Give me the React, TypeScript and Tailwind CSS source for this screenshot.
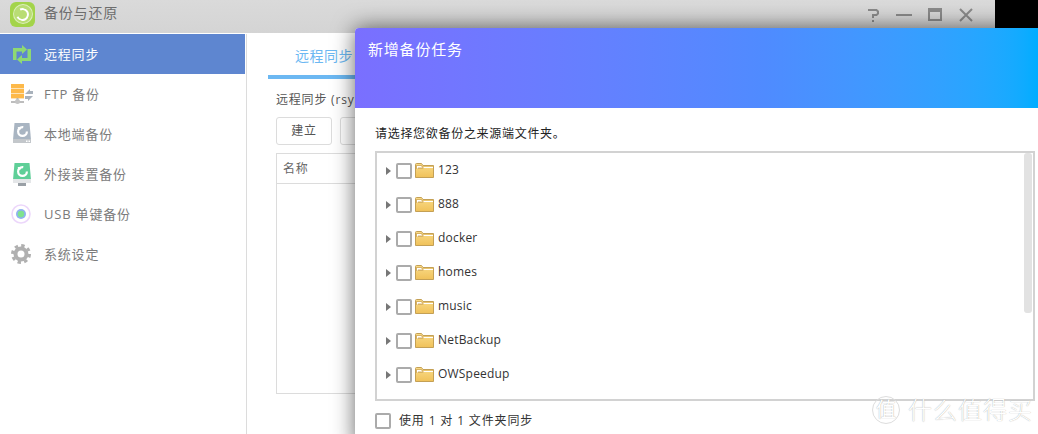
const CJK = "font-['Open_Sans','Noto_Sans_CJK_SC',sans-serif]";

const FOLDERS = ["123", "888", "docker", "homes", "music", "NetBackup", "OWSpeedup"];

function SyncIcon() {
    return (
        <svg width="18" height="19" viewBox="0 0 18 19" fill="#8ed973" className="ml-[2px]">
            <path d="M0 3h9V0l5 4.5L9 9V6.5H3.5V15H0Z" />
            <path d="M18 16H9v3l-5-4.5L9 10v3h5.5V4H18Z" />
        </svg>
    );
}

function FtpIcon() {
    return (
        <svg width="23" height="20" viewBox="0 0 23 20">
            <rect x="0" y="0" width="13" height="4.4" fill="#fdb94a" />
            <rect x="0" y="5" width="13" height="4.4" fill="#fdb94a" />
            <rect x="0" y="10" width="13" height="4.4" fill="#fdb94a" />
            <rect x="5.5" y="14" width="2" height="2" fill="#b5b5b5" />
            <rect x="0" y="17" width="13" height="2" fill="#bdbdbd" />
            <circle cx="6.5" cy="17.5" r="2.5" fill="#c4c4c4" />
            <path d="M14 10l5-5v2h3v3ZM14 12h8l-5 5v-2h-3Z" fill="#a9b2bc" />
        </svg>
    );
}

function DriveIcon({ color, foot, stub }: { color: string; foot: string; stub?: boolean }) {
    return (
        <svg width="20" height="23" viewBox="0 0 20 23" className="ml-[1px]">
            <path d="M2.5 0h15L19 17H1Z" fill={color} />
            <rect x="1" y="16" width="18" height="4" fill={foot} />
            {!stub && <path d="M14 17.5h1.5v1.5H14ZM16.5 17.5H18v1.5h-1.5Z" fill="#fff" />}
            <circle cx="10.5" cy="8.5" r="4.4" fill="none" stroke="#fff" strokeWidth="2.2" strokeDasharray="21 7" />
            <path d="M5.5 4l4.5.2-2.2 3.3Z" fill="#fff" />
            {stub && <rect x="6" y="20" width="8" height="3" fill="#9aa0a6" />}
        </svg>
    );
}

function UsbIcon() {
    return (
        <svg width="20" height="20" viewBox="0 0 20 20">
            <circle cx="10" cy="10" r="9" fill="#fff" stroke="#ecd7fb" strokeWidth="1.6" />
            <circle cx="10" cy="10" r="5" fill="#8fb2f0" />
            <circle cx="10" cy="10" r="3.2" fill="#7fe38f" />
        </svg>
    );
}

function GearIcon() {
    return (
        <svg width="20" height="20" viewBox="0 0 20 20" fill="none" stroke="#b0b0b0">
            <circle cx="10" cy="10" r="5.5" strokeWidth="4" />
            <circle cx="10" cy="10" r="8.5" strokeWidth="3" strokeDasharray="3.4 3.27" />
        </svg>
    );
}

function FolderIcon() {
    return (
        <svg width="19" height="15" viewBox="0 0 19 15">
            <defs>
                <linearGradient id="folderFill" x1="0" y1="0" x2="0" y2="1">
                    <stop offset="0" stopColor="#f9dc8a" />
                    <stop offset="1" stopColor="#f0c159" />
                </linearGradient>
            </defs>
            <path d="M.5 14.5V1.5A1 1 0 0 1 1.5.5h5L8 2.5h10.5v12Z" fill="url(#folderFill)" stroke="#c4a055" />
            <path d="M1 2h5.5L8 3.5h10V5H9L7.5 6H1Z" fill="#d9b364" />
            <path d="M2 3h4l1.5 1.5H3V5.5H2Z" fill="#fff" />
            <path d="M8 4h10v1H9Z" fill="#fff" />
        </svg>
    );
}

function Check() {
    return <span className="block w-[16px] h-[16px] rounded-[2px] border-2 border-[#ababab] bg-white shrink-0" />;
}

const NAV = [
    { label: "远程同步", icon: <SyncIcon />, active: true },
    { label: "FTP 备份", icon: <FtpIcon /> },
    { label: "本地端备份", icon: <DriveIcon color="#a9b5c2" foot="#c3c7cb" /> },
    { label: "外接装置备份", icon: <DriveIcon color="#5fcf98" foot="#e4e6e8" stub /> },
    { label: "USB 单键备份", icon: <UsbIcon /> },
    { label: "系统设定", icon: <GearIcon /> },
];

export default function App() {
    return (
        <div className={`relative w-[1038px] h-[434px] overflow-hidden bg-black ${CJK}`}>
            {/* App window */}
            <div className="w-[995px] h-[434px] bg-white flex flex-col">
                {/* Title bar */}
                <div className="h-[33px] shrink-0 bg-gradient-to-b from-[#dadada] to-[#d4d4d4] flex items-center">
                    <div className="ml-[10px] -mt-[5px] w-[25px] h-[25px] rounded-[6px] bg-[#a3d44a] flex items-center justify-center">
                        <div className="w-[20px] h-[20px] rounded-full bg-[#b9dd74] border border-white/50 flex items-center justify-center">
                            <div className="w-[13px] h-[13px] rounded-full border-2 border-white border-l-transparent rotate-[20deg]" />
                        </div>
                    </div>
                    <span className="ml-[9px] text-[14px] tracking-[0.8px] text-[#6d6d6d] -mt-[8px]">备份与还原</span>
                    <div className="ml-auto mr-[21px] -mt-[4px] flex items-center gap-[15px]">
                        <svg width="16" height="16" viewBox="0 0 16 16" fill="none" stroke="#8a8a8a" strokeWidth="2">
                            <path d="M3 3h8.5l1.5 1.5v2L11.5 8H8v3" />
                            <path d="M8 13v2" />
                        </svg>
                        <span className="block w-[16px] h-[2px] bg-[#8a8a8a]" />
                        <span className="block w-[14px] h-[13px] border-2 border-[#8a8a8a] border-t-[4px] ml-[1px]" />
                        <svg width="16" height="16" viewBox="0 0 16 16" className="ml-[1px]">
                            <path d="M2 2l12 12M14 2L2 14" stroke="#8a8a8a" strokeWidth="2" />
                        </svg>
                    </div>
                </div>

                <div className="flex-1 flex min-h-0 pt-px">
                    {/* Sidebar */}
                    <div className="w-[247px] shrink-0 border-r border-[#dcdcdc] pr-px">
                        {NAV.map((item) => (
                            <div
                                key={item.label}
                                className={`h-[40px] flex items-center text-[13px] tracking-[0.8px] ${item.active ? "bg-[#5e86d0] text-white" : "text-[#7b7b7b]"}`}
                            >
                                <span className="w-[44px] pl-[11px] flex justify-start">{item.icon}</span>
                                <span className="mt-[1px]">{item.label}</span>
                            </div>
                        ))}
                    </div>

                    {/* Content */}
                    <div className="flex-1 pl-[21px] pr-[20px]">
                        <div className="h-[45px] border-b border-[#c9c9c9] flex">
                            <div className="w-[118px] h-[45px] border-b-4 border-[#6cb8f2] pl-[27px] pt-[11px] text-[14px] tracking-[0.5px] text-[#6cb8f2]">远程同步</div>
                        </div>
                        <div className="ml-[8px] mt-[12px] text-[12px] leading-[18px] tracking-[0.8px] text-[#555]">远程同步 (rsync)</div>
                        <div className="ml-[8px] mt-[8px] flex gap-[8px]">
                            <div className="w-[56px] h-[28px] rounded-[3px] border border-[#dcdcdc] flex items-center justify-center text-[12px] tracking-[0.8px] text-[#555]">建立</div>
                            <div className="w-[56px] h-[28px] rounded-[3px] border border-[#dcdcdc]" />
                        </div>
                        <div className="ml-[8px] mt-[8px] h-[241px] border border-[#dcdcdc]">
                            <div className="h-[30px] border-b border-[#dcdcdc] pl-[6px] flex items-center text-[12px] tracking-[0.8px] text-[#666]">名称</div>
                        </div>
                    </div>
                </div>
            </div>

            {/* Backup task dialog */}
            <div className="absolute left-[355px] top-[28px] w-[700px] h-[420px] bg-white rounded-tl-[4px] shadow-[0_0_22px_rgba(0,0,0,0.6)]">
                <div className="w-[683px] h-[80px] rounded-tl-[4px] bg-gradient-to-r from-[#7a6fff] via-[#4f8bff] via-60% to-[#00adff] pl-[13px] pt-[11px] text-[15px] leading-[20px] tracking-[0.8px] text-white">
                    新增备份任务
                </div>
                <div className="pl-[20px] pt-[18px]">
                    <div className="text-[12px] leading-[16px] tracking-[0.7px] text-[#222]">请选择您欲备份之来源端文件夹。</div>
                    <div className="relative mt-[9px] w-[660px] h-[250px] border-2 border-[#d2d2d2] pt-[1px]">
                        {FOLDERS.map((name) => (
                            <div key={name} className="h-[34px] flex items-center pl-[9px]">
                                <span className="w-0 h-0 border-y-[4px] border-y-transparent border-l-[5px] border-l-[#777]" />
                                <span className="ml-[5px]"><Check /></span>
                                <span className="ml-[3px] -mt-[2px]"><FolderIcon /></span>
                                <span className="ml-[4px] text-[12px] tracking-[0.2px] text-[#333] -mt-[2px]">{name}</span>
                            </div>
                        ))}
                        <div className="absolute right-[1px] top-0 w-[8px] h-[160px] rounded-[3px] bg-[#e2e2e2]" />
                    </div>
                    <div className="mt-[11px] flex items-center">
                        <Check />
                        <span className="ml-[8px] text-[12px] tracking-[0.85px] text-[#333]">使用 1 对 1 文件夹同步</span>
                    </div>
                </div>
            </div>

            {/* Watermark */}
            <div className="absolute left-[872px] top-[396px] flex items-center text-white [text-shadow:0_0_1px_#999]">
                <span className="w-[28px] h-[28px] rounded-full border border-[#ddd] flex items-center justify-center text-[20px] leading-none">值</span>
                <span className="ml-[8px] text-[24px] leading-none tracking-[1px] font-light">什么值得买</span>
            </div>
        </div>
    );
}
